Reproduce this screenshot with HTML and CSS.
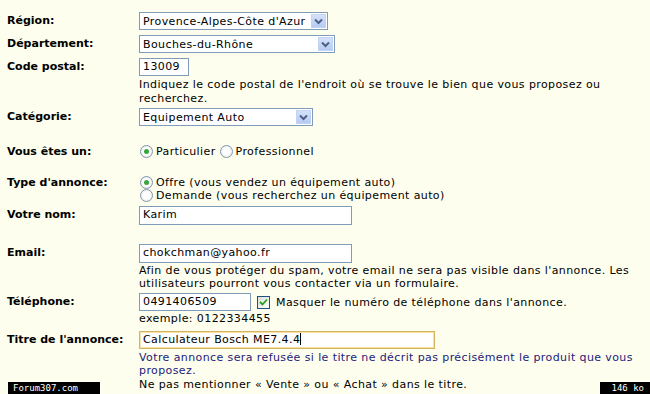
FILE: index.html
```html
<!DOCTYPE html>
<html lang="fr">
<head>
  <meta charset="UTF-8">
  <title>Déposer une annonce</title>
  <link rel="stylesheet" href="styles.css">
</head>
<body>
  <div class="form">

    <div class="row row-region">
      <div class="label">Région:</div>
      <div class="field">
        <div class="select sel-region"><span class="select-text">Provence-Alpes-Côte d'Azur</span><span class="arrow"><svg width="9" height="7" viewBox="0 0 9 7"><path d="M1 1.5 L4.5 5 L8 1.5" fill="none" stroke="#4d6185" stroke-width="2"/></svg></span></div>
      </div>
    </div>

    <div class="row row-dept">
      <div class="label">Département:</div>
      <div class="field">
        <div class="select sel-dept"><span class="select-text">Bouches-du-Rhône</span><span class="arrow"><svg width="9" height="7" viewBox="0 0 9 7"><path d="M1 1.5 L4.5 5 L8 1.5" fill="none" stroke="#4d6185" stroke-width="2"/></svg></span></div>
      </div>
    </div>

    <div class="row row-cp">
      <div class="label">Code postal:</div>
      <div class="field">
        <div class="input input-cp">13009</div>
        <p class="help help-cp">Indiquez le code postal de l'endroit où se trouve le bien que vous proposez ou<br>recherchez.</p>
      </div>
    </div>

    <div class="row row-cat">
      <div class="label">Catégorie:</div>
      <div class="field">
        <div class="select sel-cat"><span class="select-text">Equipement Auto</span><span class="arrow"><svg width="9" height="7" viewBox="0 0 9 7"><path d="M1 1.5 L4.5 5 L8 1.5" fill="none" stroke="#4d6185" stroke-width="2"/></svg></span></div>
      </div>
    </div>

    <div class="row row-type">
      <div class="label">Vous êtes un:</div>
      <div class="field">
        <div class="radios-inline">
          <span class="radio checked"></span><span class="radio-label">Particulier</span>
          <span class="radio"></span><span class="radio-label">Professionnel</span>
        </div>
      </div>
    </div>

    <div class="row row-annonce">
      <div class="label">Type d'annonce:</div>
      <div class="field">
        <div class="radio-line"><span class="radio checked"></span><span class="radio-label">Offre (vous vendez un équipement auto)</span></div>
        <div class="radio-line"><span class="radio"></span><span class="radio-label">Demande (vous recherchez un équipement auto)</span></div>
      </div>
    </div>

    <div class="row row-nom">
      <div class="label">Votre nom:</div>
      <div class="field">
        <div class="input input-wide">Karim</div>
      </div>
    </div>

    <div class="row row-email">
      <div class="label">Email:</div>
      <div class="field">
        <div class="input input-wide">chokchman@yahoo.fr</div>
        <p class="help">Afin de vous protéger du spam, votre email ne sera pas visible dans l'annonce. Les<br>utilisateurs pourront vous contacter via un formulaire.</p>
      </div>
    </div>

    <div class="row row-tel">
      <div class="label">Téléphone:</div>
      <div class="field">
        <div class="tel-line">
          <div class="input input-tel">0491406509</div>
          <span class="checkbox"><svg width="9" height="8" viewBox="0 0 9 8"><path d="M1 4 L3.5 6.5 L8 1.5" fill="none" stroke="#21a121" stroke-width="1.8"/></svg></span>
          <span class="check-label">Masquer le numéro de téléphone dans l'annonce.</span>
        </div>
        <p class="help">exemple: 0122334455</p>
      </div>
    </div>

    <div class="row row-titre">
      <div class="label">Titre de l'annonce:</div>
      <div class="field">
        <div class="input input-titre">Calculateur Bosch ME7.4.4<span class="caret"></span></div>
        <p class="help help-blue">Votre annonce sera refusée si le titre ne décrit pas précisément le produit que vous<br>proposez.</p>
        <p class="help help-last">Ne pas mentionner « Vente » ou « Achat » dans le titre.</p>
      </div>
    </div>

  </div>

  <div class="stamp stamp-left">Forum307.com</div>
  <div class="stamp stamp-right">146 ko</div>
</body>
</html>
```

FILE: styles.css
```css
body {
  margin: 0;
  background-color: #fefeee;
  font-family: 'DejaVu Sans', sans-serif;
  font-size: 11px;
  letter-spacing: 0.4px;
  color: #000;
  height: 394px;
  overflow: hidden;
  position: relative;
}

.form {
  padding: 12px 0 0 7px;
}

.row {
  display: flex;
  align-items: flex-start;
}

.label {
  width: 132px;
  flex-shrink: 0;
  font-weight: bold;
  letter-spacing: 0;
  line-height: 18px;
}

.field {
  flex: 1;
}

/* spacing between rows */
.row-dept { margin-top: 5px; }
.row-cp { margin-top: 5px; }
.row-cat { margin-top: 2px; }
.row-type { margin-top: 17px; }
.row-annonce { margin-top: 15px; }
.row-nom { margin-top: 4px; }
.row-email { margin-top: 19px; }
.row-tel { margin-top: 3px; }
.row-titre { margin-top: 6px; }

.row-annonce .label { line-height: 13px; }

/* fake selects */
.select {
  display: flex;
  align-items: center;
  box-sizing: border-box;
  height: 18px;
  background: white;
  border: 1px solid #7f9db9;
  padding-left: 3px;
}

.select-text {
  flex: 1;
  white-space: nowrap;
  overflow: hidden;
}

.arrow {
  width: 15px;
  height: 14px;
  margin-right: 1px;
  background: linear-gradient(#d4e1fb, #b6caf2);
  border: 1px solid #c4d3f3;
  box-sizing: border-box;
  display: flex;
  align-items: center;
  justify-content: center;
  flex-shrink: 0;
}

.sel-region { width: 189px; }
.sel-dept { width: 196px; }
.sel-cat { width: 174px; }

/* fake inputs */
.input {
  box-sizing: border-box;
  height: 18px;
  line-height: 16px;
  background: white;
  border: 1px solid #7f9db9;
  padding-left: 3px;
  white-space: nowrap;
}

.input-cp { width: 50px; }
.input-wide { width: 213px; height: 19px; }
.input-tel { width: 112px; }

.input-titre {
  width: 296px;
  border-color: #d7b35f;
  box-shadow: inset 0 0 0 1px #f6e1a8;
}

.caret {
  display: inline-block;
  width: 1px;
  height: 12px;
  background: #000;
  vertical-align: -2px;
}

.help {
  margin: 1px 0 0 0;
  line-height: 13px;
  white-space: nowrap;
}

.help-cp { margin-top: 2px; line-height: 14px; }

.help-blue {
  color: #1b1b7a;
  margin-top: 2px;
}

.help-last { margin-top: 1px; }

/* radios */
.radios-inline,
.radio-line {
  display: flex;
  align-items: center;
  height: 13px;
}

.radios-inline { margin-top: 2px; }

.radio {
  width: 11px;
  height: 11px;
  border-radius: 50%;
  border: 1px solid #8095ad;
  background: radial-gradient(circle, #ffffff 40%, #dfe3e8 100%);
  margin: 0 3px 0 1px;
  flex-shrink: 0;
  position: relative;
}

.radio.checked::after {
  content: '';
  position: absolute;
  left: 3px;
  top: 3px;
  width: 5px;
  height: 5px;
  border-radius: 50%;
  background: #3aa53a;
}

.radio-label {
  margin-right: 3px;
}

/* telephone line */
.tel-line {
  display: flex;
  align-items: center;
}

.checkbox {
  width: 11px;
  height: 11px;
  margin: 0 6px 0 6px;
  border: 1px solid #1c5180;
  background: linear-gradient(135deg, #dcdcd6, #ffffff);
  display: flex;
  align-items: center;
  justify-content: center;
  flex-shrink: 0;
}

/* watermarks over the screenshot */
.stamp {
  position: absolute;
  bottom: 0;
  height: 12px;
  background: #000;
  color: #fff;
  font-family: 'DejaVu Sans Mono', monospace;
  font-size: 9px;
  letter-spacing: 0;
  line-height: 12px;
}

.stamp-left {
  left: 8px;
  width: 92px;
  padding-left: 5px;
  box-sizing: border-box;
}

.stamp-right {
  right: 0;
  width: 50px;
  text-align: right;
  padding-right: 6px;
  box-sizing: border-box;
}
```
